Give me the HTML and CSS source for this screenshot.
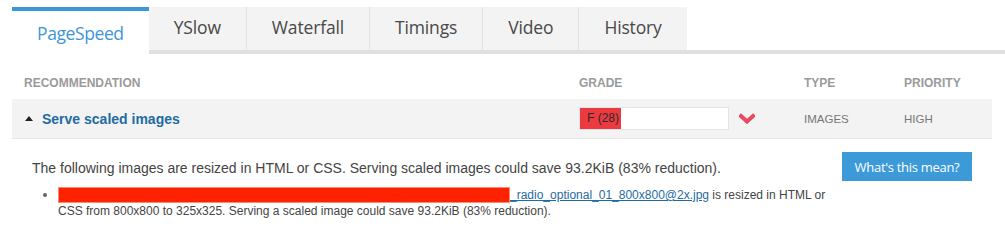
FILE: index.html
```html
<!DOCTYPE html>
<html>
<head>
<meta charset="utf-8">
<link rel="stylesheet" href="styles.css">
</head>
<body>
<div class="page">
  <ul class="tabs">
    <li class="tab active">PageSpeed</li>
    <li class="tab">YSlow</li>
    <li class="tab">Waterfall</li>
    <li class="tab">Timings</li>
    <li class="tab">Video</li>
    <li class="tab">History</li>
  </ul>
  <div class="table">
    <div class="thead">
      <div class="c1">RECOMMENDATION</div>
      <div>GRADE</div>
      <div>TYPE</div>
      <div>PRIORITY</div>
    </div>
    <div class="row">
      <div class="c1 title"><span class="tri"></span>Serve scaled images</div>
      <div class="grade-cell">
        <div class="grade"><div class="fill" style="width:28%">F (28)</div></div>
        <svg class="chev" width="16" height="11" viewBox="0 0 16 11"><path d="M2 3 L8 8.5 L14 3" fill="none" stroke="#e84a5f" stroke-width="4" stroke-linecap="square"/></svg>
      </div>
      <div class="small">IMAGES</div>
      <div class="small">HIGH</div>
    </div>
    <div class="detail">
      <div class="detail-text">
        <p class="lead">The following images are resized in HTML or CSS. Serving scaled images could save 93.2KiB (83% reduction).</p>
        <ul class="list">
          <li><span class="redact"></span><a href="#">_radio_optional_01_800x800@2x.jpg</a> is resized in HTML or CSS from 800x800 to 325x325. Serving a scaled image could save 93.2KiB (83% reduction).</li>
        </ul>
      </div>
      <a class="btn" href="#">What's this mean?</a>
    </div>
  </div>
</div>
</body>
</html>
```
FILE: styles.css
```css
* { box-sizing: border-box; }
body { margin: 0; background: #fff; font-family: "Liberation Sans", Arial, sans-serif; }
.page { padding: 7px 0 0 12px; }
.tabs {
  list-style: none; margin: 0; padding: 0;
  display: flex; border-bottom: 4px solid #e0e0e0;
}
.tab {
  padding: 0 25px 4px;
  display: flex; align-items: center; justify-content: center;
  background: #f3f3f3; color: #484848;
  font-family: "Open Sans", sans-serif; font-size: 17.5px; letter-spacing: -0.15px;
  border-left: 1px solid #e2e2e2;
  margin-bottom: -4px; height: 47px;
}
.tab.active { border-left: none; background: #fff; color: #3d96d8; border-top: 4px solid #3b97d9; padding-bottom: 0; letter-spacing: -0.4px; }
.tab + .tab { border-bottom: 4px solid #e0e0e0; }
.tab:nth-child(2) { border-left: none; }
.table { width: 980px; margin-top: 13px; }
.thead, .row {
  display: grid; grid-template-columns: 567px 225px 100px 88px; align-items: center;
}
.thead { height: 32px; color: #9a9a9a; font-size: 12px; font-weight: bold; }
.thead .c1 { padding-left: 12px; }
.row { height: 40px; background: #f3f3f3; border-bottom: 1px solid #e6e6e6; }
.title { padding-left: 13px; color: #1f6ba2; font-weight: bold; font-size: 14px; display: flex; align-items: center; }
.tri { width: 0; height: 0; border-left: 4px solid transparent; border-right: 4px solid transparent; border-bottom: 5px solid #222; margin-right: 9px; margin-top: -1px; }
.grade-cell { display: flex; align-items: center; }
.grade { width: 150px; height: 23px; background: #fff; border: 1px solid #e4e4e4; }
.fill { height: 100%; background: #ec3a40; color: #2b2b2b; font-size: 12px; padding-left: 7px; line-height: 21px; white-space: nowrap; }
.chev { margin-left: 10px; }
.small { font-size: 11.5px; color: #777; }
.detail { display: flex; justify-content: space-between; padding: 21px 20px 0 20px; }
.lead { margin: 0; font-size: 14px; color: #444; line-height: 17px; }
.list { margin: 9px 0 0 0; padding-left: 26px; font-size: 12px; color: #444; line-height: 16px; width: 800px; }
.list li { list-style: disc; }
.list li::marker { color: #666; font-size: 14px; }
.redact { display: inline-block; width: 452px; height: 16px; background: #ff2200; border: 1px solid #ff8a73; vertical-align: top; }
.list a { color: #1f6ba2; text-decoration: underline; }
.btn {
  display: flex; align-items: center; justify-content: center;
  width: 130px; height: 29px; margin-top: -8px;
  background: #3d9ad9; color: #fff; text-decoration: none;
  font-family: "Open Sans", sans-serif; font-size: 13px; letter-spacing: -0.3px;
}
```
